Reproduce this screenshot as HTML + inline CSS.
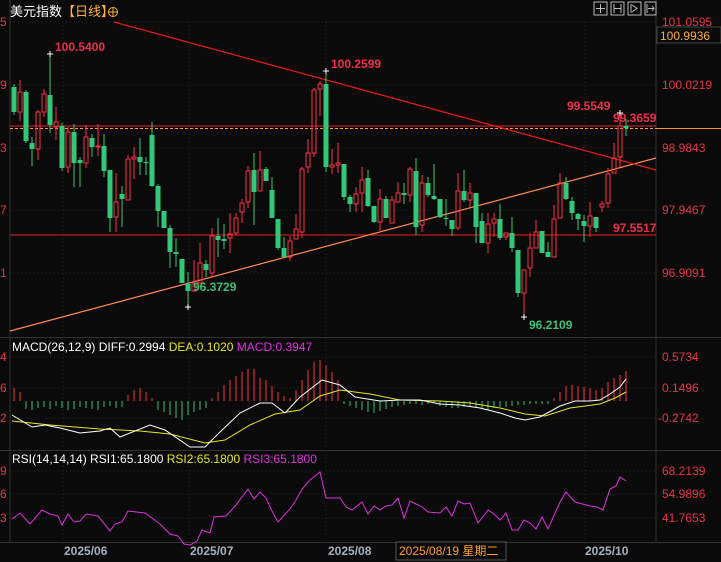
<!DOCTYPE html>
<html><head><meta charset="utf-8">
<style>
html,body{margin:0;padding:0;background:#0a0a0a;}
body{width:721px;height:562px;overflow:hidden;position:relative;font-family:"Liberation Sans","Noto Sans CJK SC",sans-serif;}
svg{position:absolute;left:0;top:0;}
</style></head>
<body>
<svg id="s" width="721" height="562" xmlns="http://www.w3.org/2000/svg" font-family="Liberation Sans, Noto Sans CJK SC, sans-serif">
<rect width="721" height="562" fill="#0a0a0a"/>
<g id="grid" stroke="#2a2a2a" stroke-dasharray="1,3" stroke-width="1">
<line x1="10" y1="22" x2="656" y2="22"/><line x1="10" y1="85" x2="656" y2="85"/><line x1="10" y1="148" x2="656" y2="148"/><line x1="10" y1="210" x2="656" y2="210"/><line x1="10" y1="273" x2="656" y2="273"/>
<line x1="10" y1="357" x2="656" y2="357"/><line x1="10" y1="388" x2="656" y2="388"/><line x1="10" y1="418" x2="656" y2="418"/>
<line x1="10" y1="471" x2="656" y2="471"/><line x1="10" y1="494" x2="656" y2="494"/><line x1="10" y1="518" x2="656" y2="518"/>
<line x1="63" y1="22" x2="63" y2="542"/><line x1="189" y1="22" x2="189" y2="542"/><line x1="326" y1="22" x2="326" y2="542"/><line x1="585" y1="22" x2="585" y2="542"/>
</g>
<g stroke="#333" stroke-width="1">
<line x1="10" y1="0" x2="10" y2="542"/><line x1="656" y1="0" x2="656" y2="542"/>
<line x1="0" y1="337.5" x2="721" y2="337.5"/><line x1="0" y1="450.5" x2="721" y2="450.5"/><line x1="0" y1="542.5" x2="721" y2="542.5"/>
</g>
<line x1="10" y1="126" x2="656" y2="126" stroke="#e82020" stroke-width="1"/>
<line x1="10" y1="128.5" x2="656" y2="128.5" stroke="#ff9a2a" stroke-width="1" stroke-dasharray="3,2"/>
<line x1="656" y1="128.5" x2="721" y2="128.5" stroke="#ff9a2a" stroke-width="1"/>
<line x1="10" y1="235" x2="656" y2="235" stroke="#e82020" stroke-width="1"/>
<line x1="10" y1="331" x2="656" y2="158" stroke="#ff8a50" stroke-width="1.2"/>
<line x1="114" y1="22" x2="656" y2="170" stroke="#ee1a1a" stroke-width="1.2"/>
<g id="candles"></g>
<g id="hist"></g>
<polyline id="dea" fill="none" stroke="#e6e62a" stroke-width="1"/>
<polyline id="diff" fill="none" stroke="#ffffff" stroke-width="1"/>
<polyline id="rsi" fill="none" stroke="#e030e0" stroke-width="1"/>
<g stroke="#fff" stroke-width="1">
<line x1="47" y1="54" x2="53" y2="54"/><line x1="50" y1="51" x2="50" y2="57"/>
<line x1="323" y1="71" x2="329" y2="71"/><line x1="326" y1="68" x2="326" y2="74"/>
<line x1="185" y1="307" x2="191" y2="307"/><line x1="188" y1="304" x2="188" y2="310"/>
<line x1="521" y1="317" x2="527" y2="317"/><line x1="524" y1="314" x2="524" y2="320"/>
<line x1="617" y1="113" x2="623" y2="113"/><line x1="620" y1="110" x2="620" y2="116"/>
</g>
<g font-size="12" font-weight="bold" fill="#f0304a">
<text x="55" y="51">100.5400</text>
<text x="331" y="68">100.2599</text>
<text x="567" y="110">99.5549</text>
<text x="613" y="122">99.3659</text>
<text x="613" y="232">97.5517</text>
</g>
<g font-size="12" font-weight="bold" fill="#3cc27a">
<text x="193" y="291">96.3729</text>
<text x="529" y="329">96.2109</text>
</g>
<g font-size="12" fill="#e8344a">
<text x="662" y="26">101.0595</text>
<text x="662" y="89">100.0219</text>
<text x="662" y="152">98.9843</text>
<text x="662" y="214">97.9467</text>
<text x="662" y="277">96.9091</text>
<text x="662" y="361">0.5734</text>
<text x="662" y="392">0.1496</text>
<text x="658" y="422">-0.2742</text>
<text x="662" y="475">68.2139</text>
<text x="662" y="498">54.9896</text>
<text x="662" y="522">41.7653</text>
<text x="0" y="26">5</text><text x="0" y="89">9</text><text x="0" y="152">3</text><text x="0" y="214">7</text><text x="0" y="277">1</text>
<text x="0" y="361">4</text><text x="0" y="392">6</text><text x="0" y="422">2</text>
<text x="0" y="475">9</text><text x="0" y="498">6</text><text x="0" y="522">3</text>
</g>
<rect x="657" y="27" width="64" height="16" fill="#0a0a0a" stroke="#444"/>
<text x="660" y="40" font-size="12" fill="#ffb040">100.9936</text>
<text x="10" y="16" font-size="13" fill="#ffffff">美元指数<tspan fill="#ffb040">【日线】</tspan></text>
<circle cx="113" cy="12" r="4.5" fill="none" stroke="#ffb040" stroke-width="1"/><line x1="108.5" y1="12" x2="117.5" y2="12" stroke="#ffb040"/><line x1="113" y1="7.5" x2="113" y2="16.5" stroke="#ffb040"/>
<g stroke="#bbb" fill="none" stroke-width="1">
<rect x="594" y="2" width="13" height="13"/><rect x="611" y="2" width="13" height="13"/><rect x="628" y="2" width="13" height="13"/><rect x="645" y="2" width="11" height="13"/>
<path d="M600.5 4v9M596 8.5h9"/><path d="M614 4v9M621 4v9M614 8.5h7"/><path d="M631 4v9M632 5l5 3.5-5 3.5"/><path d="M647 4v9M648 8.5h6M652 6l2 2.5-2 2.5"/>
</g>
<text x="12" y="351" font-size="12" fill="#ffffff">MACD(26,12,9) DIFF:0.2994 <tspan fill="#e6e62a">DEA:0.1020</tspan> <tspan fill="#e030e0">MACD:0.3947</tspan></text>
<text x="12" y="463" font-size="12" fill="#ffffff">RSI(14,14,14) RSI1:65.1800 <tspan fill="#e6e62a">RSI2:65.1800</tspan> <tspan fill="#e030e0">RSI3:65.1800</tspan></text>
<g font-size="12" font-weight="bold" fill="#a8b0c0">
<text x="64" y="555">2025/06</text><text x="190" y="555">2025/07</text><text x="328" y="555">2025/08</text><text x="585" y="555">2025/10</text>
</g>
<rect x="396" y="542" width="110" height="18" fill="#0a0a0a" stroke="#555"/>
<text x="399" y="555" font-size="12" fill="#ffa030">2025/08/19 星期二</text>
</svg>
<script>
var C=[[87,112,84,115,'g'],[92,112,80,121,'r'],[92,141,90,143,'g'],[143,149,137,166,'g'],[112,149,110,160,'r'],[94,112,89,117,'r'],[95,125,54,133,'g'],[122,127,107,140,'r'],[126,168,123,171,'g'],[132,167,127,173,'r'],[132,163,124,187,'g'],[160,163,157,187,'g'],[137,163,125,168,'r'],[138,147,134,157,'g'],[146,147,124,156,'r'],[146,171,134,177,'g'],[170,218,170,232,'g'],[202,217,173,232,'r'],[194,199,186,227,'g'],[159,200,155,200,'r'],[157,159,147,179,'r'],[157,162,138,175,'g'],[162,163,157,175,'g'],[135,186,122,187,'g'],[186,211,184,227,'g'],[211,228,211,228,'g'],[228,252,225,268,'g'],[252,254,238,267,'g'],[259,283,259,283,'g'],[284,291,272,308,'g'],[283,291,260,292,'r'],[263,283,243,283,'r'],[264,270,260,277,'g'],[236,273,228,277,'r'],[236,240,218,257,'g'],[239,241,224,249,'g'],[234,238,213,253,'r'],[218,233,213,235,'r'],[203,212,199,223,'r'],[171,202,166,208,'r'],[170,192,153,225,'g'],[170,191,151,191,'r'],[169,181,167,181,'g'],[190,218,177,218,'g'],[219,248,219,250,'g'],[248,257,237,257,'g'],[241,257,236,261,'r'],[229,239,214,239,'r'],[169,232,167,238,'r'],[153,167,139,173,'r'],[90,153,88,157,'r'],[84,89,81,116,'r'],[84,167,71,172,'g'],[165,167,149,174,'r'],[163,165,143,173,'r'],[164,197,164,200,'g'],[197,204,195,212,'g'],[194,204,187,212,'r'],[180,193,167,212,'r'],[178,206,170,207,'g'],[206,222,206,223,'g'],[199,222,189,232,'r'],[199,218,196,218,'g'],[200,223,196,223,'r'],[193,202,182,202,'r'],[193,195,183,204,'g'],[169,195,167,202,'r'],[171,227,158,235,'g'],[183,225,175,232,'r'],[183,195,177,197,'g'],[196,199,164,200,'g'],[199,217,199,218,'g'],[218,219,199,226,'g'],[220,229,220,236,'g'],[191,228,173,230,'r'],[191,200,170,202,'g'],[193,200,183,207,'r'],[193,227,193,243,'g'],[221,243,213,243,'g'],[224,243,213,253,'r'],[219,223,213,237,'r'],[219,238,204,240,'g'],[233,237,233,240,'r'],[233,248,217,252,'g'],[250,293,250,297,'g'],[270,293,270,318,'r'],[248,268,233,277,'r'],[232,248,220,248,'r'],[231,253,231,253,'g'],[252,257,242,257,'g'],[219,257,205,257,'r'],[183,218,173,218,'r'],[183,199,177,200,'g'],[201,213,197,220,'g'],[214,219,213,230,'g'],[221,226,215,242,'g'],[216,226,202,237,'r'],[217,228,217,232,'g'],[204,207,201,212,'r'],[174,203,168,208,'r'],[158,173,143,173,'r'],[126,157,113,167,'r'],[126,128,119,136,'g']];
var H=[388,392,409,410,408,407,409,406,408,410,409,407,408,409,410,407,406,408,407,395,390,388,392,398,410,412,415,418,420,415,412,410,408,398,392,385,380,376,372,369,369,378,380,386,392,396,398,390,380,370,362,360,365,372,380,404,406,408,410,412,413,411,409,407,406,405,404,404,405,404,403,406,407,408,408,407,407,408,409,410,408,407,407,406,405,405,404,404,404,404,398,392,386,385,386,387,388,390,388,382,378,375,371];
var g='',h='';
for(var i=0;i<C.length;i++){var c=C[i],x=14+6*i,o=Math.min(c[0],c[1]),b=Math.max(c[1]-c[0],1);
if(c[4]=='g'){g+='<line x1="'+x+'" y1="'+c[2]+'" x2="'+x+'" y2="'+c[3]+'" stroke="#33c77a"/><rect x="'+(x-2.5)+'" y="'+o+'" width="5" height="'+b+'" fill="#33c77a"/>';}
else{g+='<line x1="'+x+'" y1="'+c[2]+'" x2="'+x+'" y2="'+o+'" stroke="#ff2d4a"/><line x1="'+x+'" y1="'+(o+b)+'" x2="'+x+'" y2="'+c[3]+'" stroke="#ff2d4a"/><rect x="'+(x-2)+'" y="'+o+'" width="4" height="'+b+'" fill="none" stroke="#ff2d4a"/>';}}
for(var i=0;i<H.length;i++){var x=14+6*i,y=H[i];h+='<line x1="'+x+'" y1="401" x2="'+x+'" y2="'+y+'" stroke="'+(y<401?'#ff3040':'#2ec27a')+'"/>';}
document.getElementById('candles').innerHTML=g;document.getElementById('hist').innerHTML=h;
document.getElementById('diff').setAttribute('points','12,415 32,427 45,425 60,428 80,433 100,431 110,428 120,437 150,425 165,430 190,447 205,447 220,432 240,413 260,403 272,403 285,413 300,397 322,380 340,385 355,397 380,401 400,400 420,400 440,404 460,405 480,408 500,413 515,418 525,420 540,417 560,406 575,401 590,401 600,400 610,394 620,387 626,379');
document.getElementById('dea').setAttribute('points','12,421 50,425 100,429 140,431 170,434 205,443 225,440 250,425 275,414 300,410 320,396 340,390 370,394 400,400 440,401 470,403 500,408 525,414 545,416 570,408 600,404 615,398 626,392');
document.getElementById('rsi').setAttribute('points','12,519 20,513 30,524 42,510 50,514 58,516 62,525 68,514 74,522 80,521 86,514 98,516 110,531 115,524 122,522 128,511 145,513 160,524 170,534 178,536 184,544 190,545 197,541 202,530 210,533 214,517 226,516 236,505 248,489 254,499 260,492 266,498 272,511 278,522 290,509 296,500 302,489 310,480 320,472 326,498 340,498 346,507 352,510 362,502 368,514 374,506 380,510 386,506 392,505 398,498 404,518 410,501 422,507 428,512 440,513 446,507 452,516 458,501 464,504 470,503 478,523 488,510 494,514 500,520 506,513 512,530 518,530 524,520 530,523 536,529 542,517 548,529 560,502 566,492 575,502 590,506 597,507 603,510 610,489 616,486 620,477 626,481');
</script>
</body></html>
